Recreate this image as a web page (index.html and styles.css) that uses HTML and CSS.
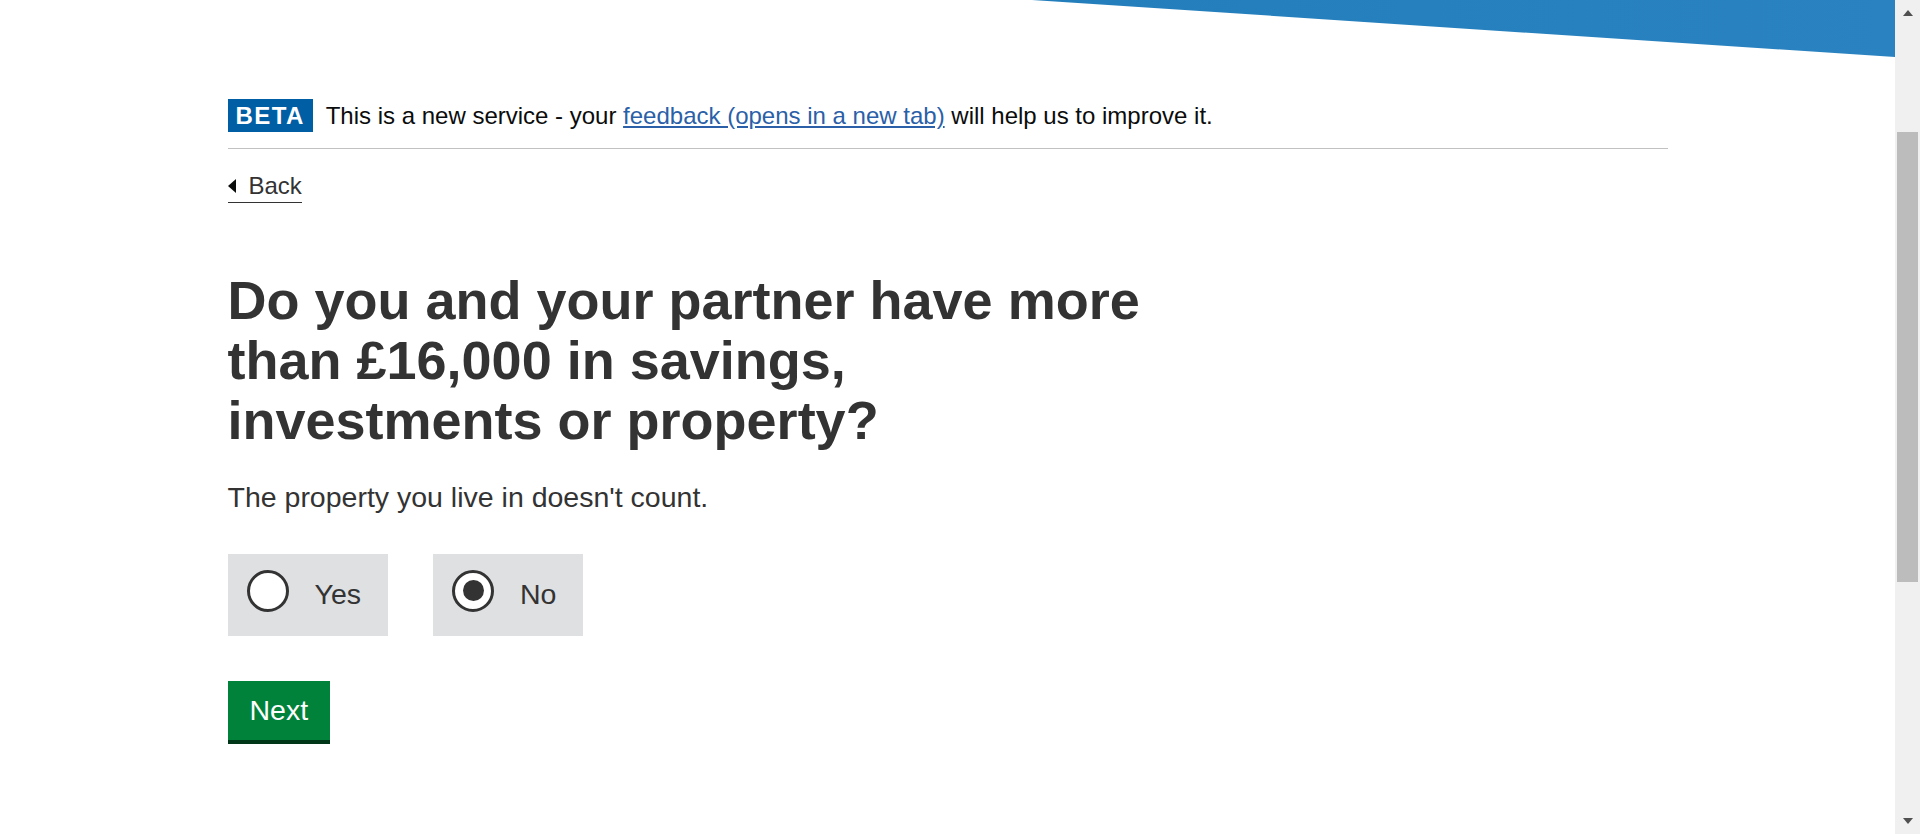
FILE: index.html
```html
<!DOCTYPE html>
<html lang="en">
<head>
<meta charset="utf-8">
<title>Savings question</title>
<link rel="stylesheet" href="styles.css">
</head>
<body>
<div class="window">
  <div class="page">
    <div class="header-deco"></div>
    <div class="container">
      <div class="phase-banner">
        <strong class="phase-tag">BETA</strong>
        <span class="phase-text">This is a new service - your <a href="#" class="link">feedback (opens in a new tab)</a> will help us to improve it.</span>
      </div>
      <a href="#" class="back-link">Back</a>
      <h1 class="heading">Do you and your partner have more than £16,000 in savings, investments or property?</h1>
      <p class="hint">The property you live in doesn't count.</p>
      <div class="radios">
        <label class="choice">
          <span class="radio"></span>
          <span class="choice-label">Yes</span>
        </label>
        <label class="choice">
          <span class="radio radio-checked"></span>
          <span class="choice-label">No</span>
        </label>
      </div>
      <button class="button" type="button">Next</button>
    </div>
  </div>
  <div class="scrollbar">
    <div class="scroll-arrow scroll-up"></div>
    <div class="scroll-track">
      <div class="scroll-thumb"></div>
    </div>
    <div class="scroll-arrow scroll-down"></div>
  </div>
</div>
</body>
</html>
```

FILE: styles.css
```css
html, body {
  margin: 0;
  padding: 0;
  height: 100%;
  overflow: hidden;
  background: #ffffff;
}

body {
  font-family: "Liberation Sans", Arial, sans-serif;
  color: #0b0c0c;
}

.window {
  display: flex;
  height: 834px;
}

.page {
  flex: 1;
  min-width: 0;
  overflow: hidden;
}

.header-deco {
  height: 57px;
  background: linear-gradient(to right, #1b77b6, #2a83c0);
  clip-path: polygon(1032px 0, 100% 0, 100% 100%);
}

.container {
  width: 1440px;
  margin: 0 auto;
}

.phase-banner {
  display: flex;
  align-items: center;
  margin-top: 42px;
  padding-bottom: 16px;
  border-bottom: 1px solid #bfc1c3;
}

.phase-tag {
  display: block;
  height: 33px;
  box-sizing: border-box;
  padding: 1px 8px 0 8px;
  background: #005ea5;
  color: #ffffff;
  font-size: 24px;
  font-weight: bold;
  line-height: 32px;
  letter-spacing: 1.4px;
  margin-right: 13px;
}

.phase-text {
  font-size: 24px;
  line-height: 33px;
  color: #0b0c0c;
}

.link {
  color: #2b5fa8;
  text-decoration: underline;
  text-underline-offset: 2px;
}

.back-link {
  display: inline-flex;
  align-items: center;
  margin-top: 21px;
  font-size: 24px;
  line-height: 32px;
  color: #333333;
  text-decoration: none;
  border-bottom: 1px solid #333333;
}

.back-link::before {
  content: "";
  width: 0;
  height: 0;
  border-top: 7px solid transparent;
  border-bottom: 7px solid transparent;
  border-right: 8px solid #0b0c0c;
  margin-right: 13px;
}

.heading {
  max-width: 930px;
  margin: 67px 0 0 0;
  font-size: 54px;
  line-height: 60px;
  font-weight: bold;
  color: #333333;
}

.hint {
  margin: 29px 0 0 0;
  font-size: 28.5px;
  line-height: 37.5px;
  color: #333333;
}

.radios {
  display: flex;
  gap: 45px;
  margin-top: 37px;
}

.choice {
  display: flex;
  align-items: flex-start;
  height: 82px;
  box-sizing: border-box;
  padding: 16px 27px 0 19px;
  background: #dee0e2;
  cursor: pointer;
}

.radio {
  width: 42px;
  height: 42px;
  box-sizing: border-box;
  border: 3px solid #333333;
  border-radius: 50%;
  background: #ffffff;
  display: flex;
  align-items: center;
  justify-content: center;
  flex: none;
}

.radio-checked::after {
  content: "";
  width: 21px;
  height: 21px;
  border-radius: 50%;
  background: #333333;
}

.choice-label {
  margin-left: 26px;
  margin-top: 10px;
  font-size: 28.5px;
  line-height: 28.5px;
  color: #333333;
}

.button {
  display: block;
  margin-top: 45px;
  height: 59px;
  padding: 0 22px;
  border: 0;
  border-radius: 0;
  background: #00823b;
  box-shadow: 0 4px 0 #003618;
  color: #ffffff;
  font-family: "Liberation Sans", Arial, sans-serif;
  font-size: 28.5px;
  line-height: 59px;
  cursor: pointer;
}

.scrollbar {
  width: 25px;
  flex: none;
  display: flex;
  flex-direction: column;
  background: #f0f0f0;
}

.scroll-arrow {
  height: 26px;
  display: flex;
  justify-content: center;
  flex: none;
}

.scroll-up {
  align-items: flex-start;
}

.scroll-up::before {
  content: "";
  margin-top: 10px;
  width: 0;
  height: 0;
  border-left: 5.5px solid transparent;
  border-right: 5.5px solid transparent;
  border-bottom: 6px solid #505050;
}

.scroll-down {
  align-items: flex-end;
}

.scroll-down::before {
  content: "";
  margin-bottom: 10px;
  width: 0;
  height: 0;
  border-left: 5.5px solid transparent;
  border-right: 5.5px solid transparent;
  border-top: 6px solid #505050;
}

.scroll-track {
  flex: 1;
  padding: 106px 2px 0 2px;
}

.scroll-thumb {
  height: 450px;
  background: #bcbcbc;
}
```
